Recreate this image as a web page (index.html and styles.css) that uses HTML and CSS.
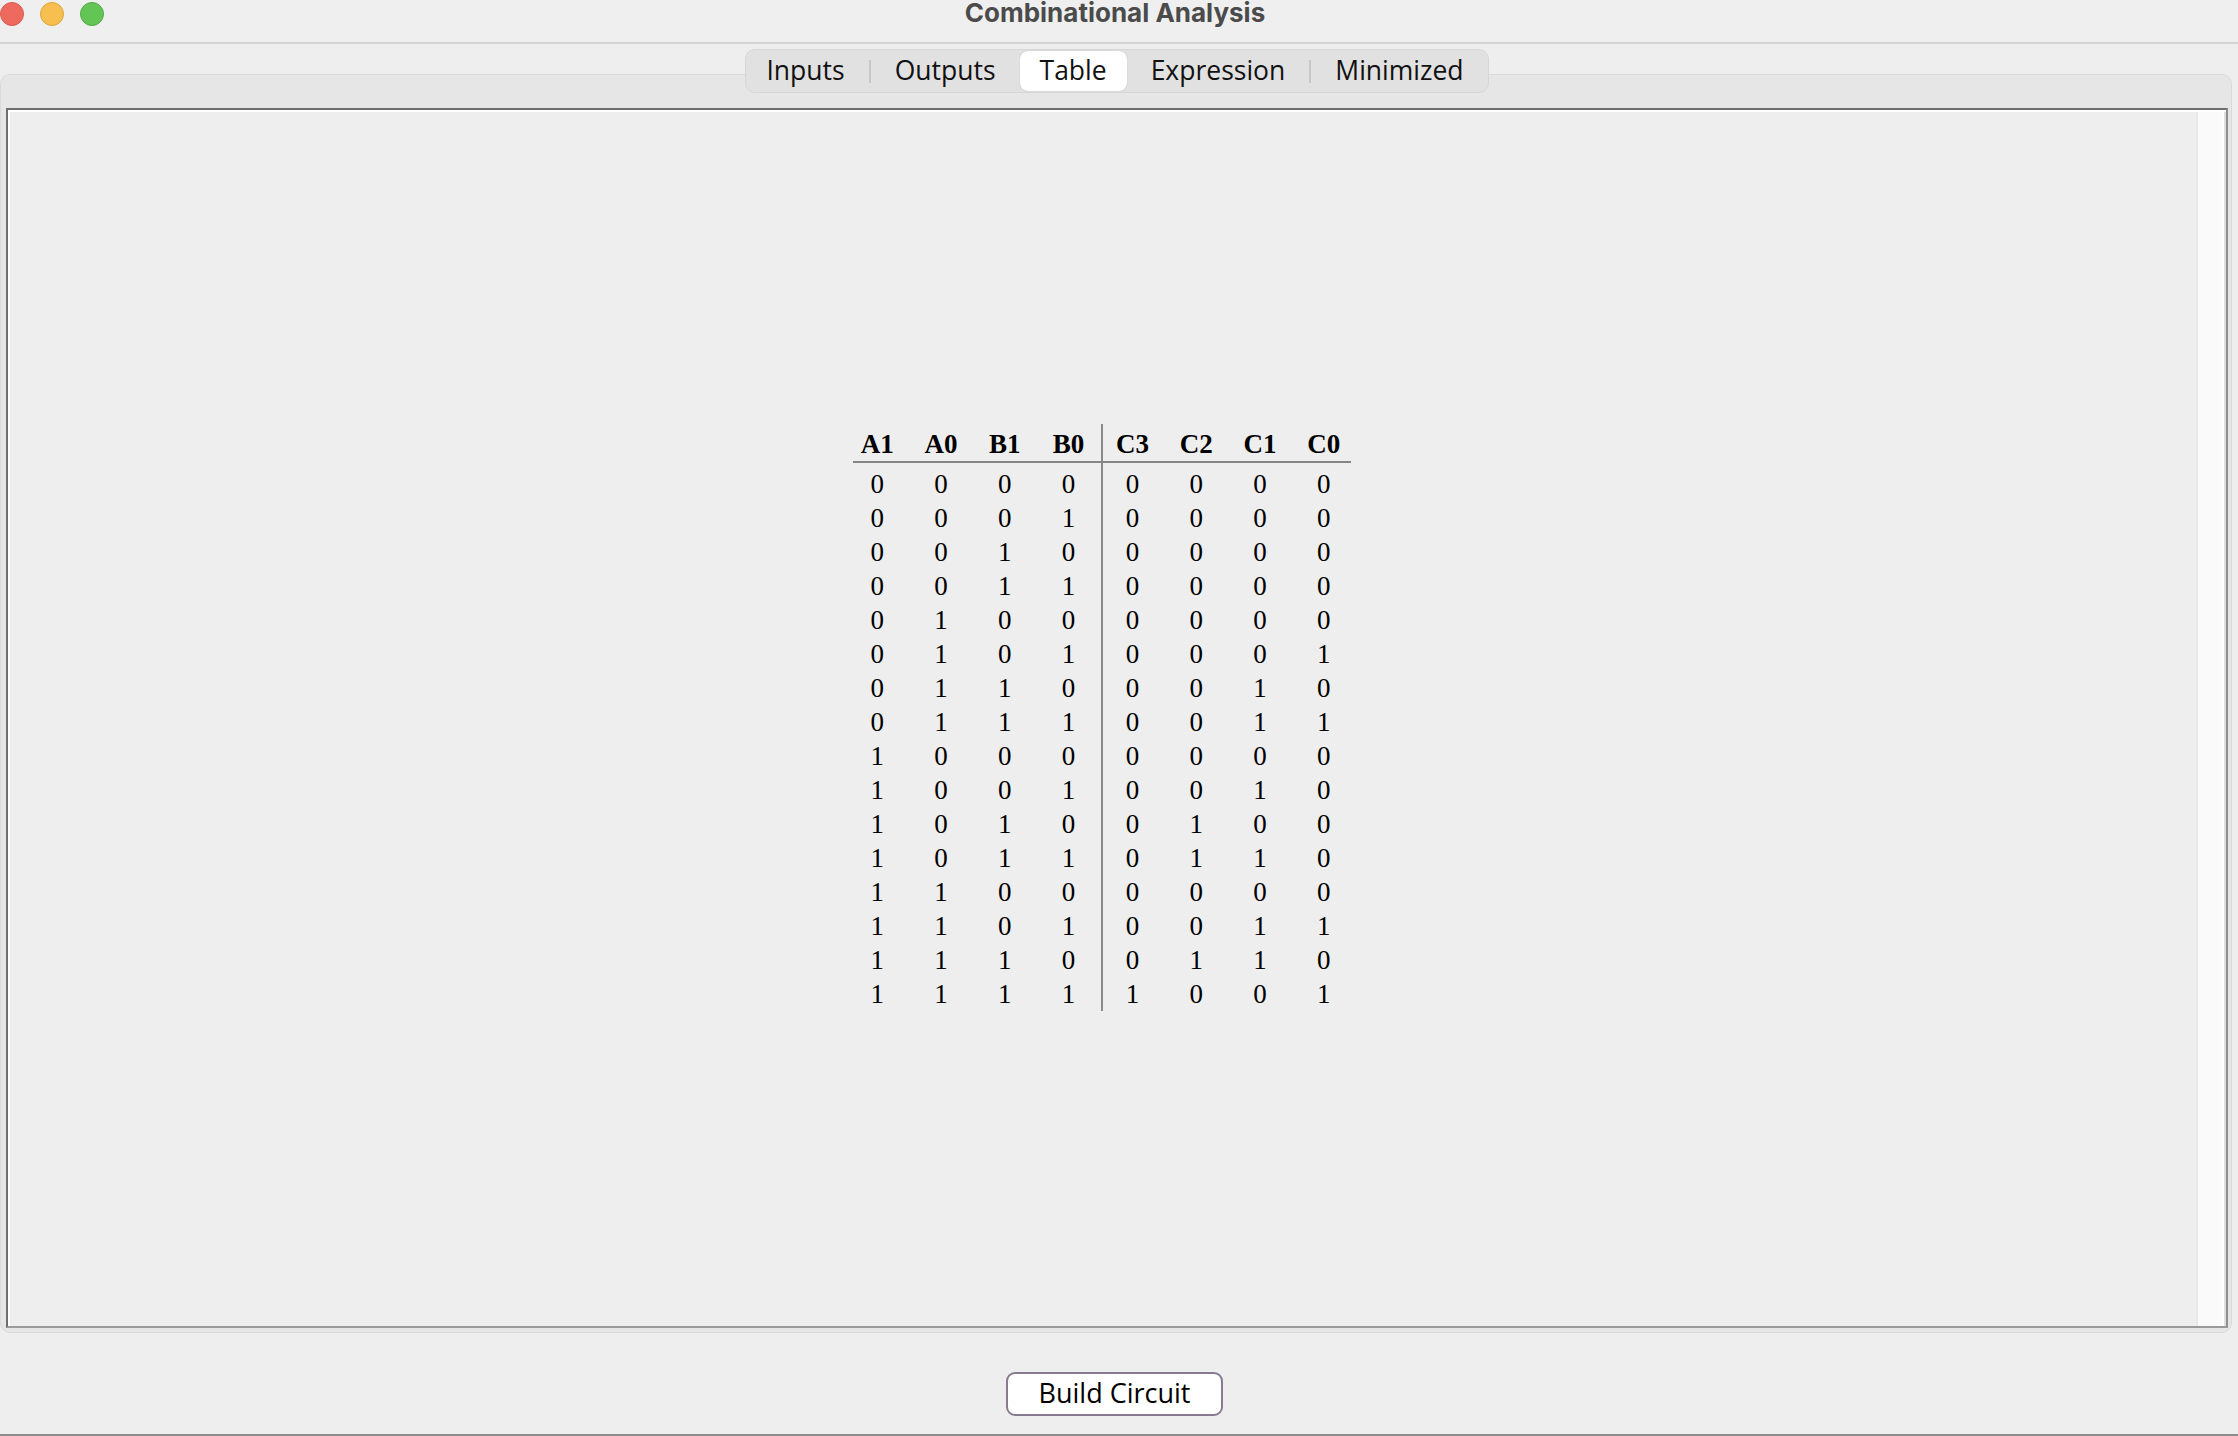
FILE: index.html
```html
<!DOCTYPE html>
<html lang="en">
<head>
<meta charset="utf-8">
<title>Combinational Analysis</title>
<link rel="stylesheet" href="styles.css">
</head>
<body>
<div class="window">
  <header class="titlebar">
    <div class="lights">
      <span class="light red"></span>
      <span class="light yellow"></span>
      <span class="light green"></span>
    </div>
    <div class="title">Combinational Analysis</div>
    <div class="spacer"></div>
  </header>

  <main class="pane">
    <nav class="tabs">
      <span class="tab">Inputs</span>
      <span class="sep"></span>
      <span class="tab">Outputs</span>
      <span class="tab selected">Table</span>
      <span class="tab">Expression</span>
      <span class="sep"></span>
      <span class="tab">Minimized</span>
    </nav>
    <section class="content">
      <div class="inner">
        <div class="view">
          <div class="truth">
            <div class="th">A1</div><div class="th">A0</div><div class="th">B1</div><div class="th">B0</div>
            <div class="th">C3</div><div class="th">C2</div><div class="th">C1</div><div class="th">C0</div>
            <div class="rule"></div>
            <div>0</div><div>0</div><div>0</div><div>0</div><div>0</div><div>0</div><div>0</div><div>0</div>
            <div>0</div><div>0</div><div>0</div><div>1</div><div>0</div><div>0</div><div>0</div><div>0</div>
            <div>0</div><div>0</div><div>1</div><div>0</div><div>0</div><div>0</div><div>0</div><div>0</div>
            <div>0</div><div>0</div><div>1</div><div>1</div><div>0</div><div>0</div><div>0</div><div>0</div>
            <div>0</div><div>1</div><div>0</div><div>0</div><div>0</div><div>0</div><div>0</div><div>0</div>
            <div>0</div><div>1</div><div>0</div><div>1</div><div>0</div><div>0</div><div>0</div><div>1</div>
            <div>0</div><div>1</div><div>1</div><div>0</div><div>0</div><div>0</div><div>1</div><div>0</div>
            <div>0</div><div>1</div><div>1</div><div>1</div><div>0</div><div>0</div><div>1</div><div>1</div>
            <div>1</div><div>0</div><div>0</div><div>0</div><div>0</div><div>0</div><div>0</div><div>0</div>
            <div>1</div><div>0</div><div>0</div><div>1</div><div>0</div><div>0</div><div>1</div><div>0</div>
            <div>1</div><div>0</div><div>1</div><div>0</div><div>0</div><div>1</div><div>0</div><div>0</div>
            <div>1</div><div>0</div><div>1</div><div>1</div><div>0</div><div>1</div><div>1</div><div>0</div>
            <div>1</div><div>1</div><div>0</div><div>0</div><div>0</div><div>0</div><div>0</div><div>0</div>
            <div>1</div><div>1</div><div>0</div><div>1</div><div>0</div><div>0</div><div>1</div><div>1</div>
            <div>1</div><div>1</div><div>1</div><div>0</div><div>0</div><div>1</div><div>1</div><div>0</div>
            <div>1</div><div>1</div><div>1</div><div>1</div><div>1</div><div>0</div><div>0</div><div>1</div>
          </div>
        </div>
        <div class="track"></div>
      </div>
    </section>
  </main>

  <footer class="actions">
    <button class="build" type="button">Build Circuit</button>
  </footer>
  <div class="edge"></div>
</div>
</body>
</html>
```

FILE: styles.css
```css
* {
  box-sizing: border-box;
}

html, body {
  margin: 0;
  padding: 0;
  width: 2238px;
  height: 1436px;
  overflow: hidden;
  background: #eeeeee;
}

.window {
  display: flex;
  flex-direction: column;
  width: 2238px;
  height: 1436px;
  background: #eeeeee;
  font-family: "Open Sans", "Noto Sans", sans-serif;
}

/* ---------- title bar ---------- */
.titlebar {
  height: 44px;
  flex: 0 0 44px;
  display: grid;
  grid-template-columns: 1fr auto 1fr;
  padding-right: 8px;
  background: #efefef;
  border-bottom: 2px solid #d3d3d3;
}

.lights {
  display: flex;
  gap: 16px;
  padding-top: 2px;
  align-items: flex-start;
}

.light {
  width: 24px;
  height: 24px;
  border-radius: 50%;
  border: 1px solid;
}

.red {
  background: #ee6a5f;
  border-color: #d65a4f;
}

.yellow {
  background: #f6bf4f;
  border-color: #dca53c;
}

.green {
  background: #62c554;
  border-color: #50aa43;
}

.title {
  font-family: "Inter", "Liberation Sans", sans-serif;
  font-weight: 700;
  font-size: 26px;
  line-height: 26px;
  color: #4b4b4b;
  white-space: nowrap;
}

/* ---------- tab pane ---------- */
.pane {
  flex: 1 1 auto;
  margin-top: 30px;
  margin-right: 6px;
  display: flex;
  flex-direction: column;
  background: #e6e6e6;
  border: 1px solid #dadada;
  border-radius: 10px;
  padding: 0 3px 4px 5px;
}

.tabs {
  align-self: center;
  display: flex;
  align-items: center;
  height: 44px;
  margin-top: -26px;
  margin-bottom: 15px;
  background: #e1e1e1;
  border: 1px solid #d6d6d6;
  border-radius: 10px;
}

.tab {
  padding: 0 24px 2px;
  font-size: 26.5px;
  line-height: 38px;
  color: #111111;
  white-space: nowrap;
}

.tab:first-child {
  padding-left: 20px;
  padding-right: 24px;
}

.tab.selected {
  padding: 0 20px 2px;
  height: 40px;
  background: #ffffff;
  border-radius: 8px;
  box-shadow: 0 0 1px rgba(0, 0, 0, 0.25);
}

.sep {
  width: 2px;
  height: 23px;
  background: #c7c7c7;
}

/* ---------- content area ---------- */
.content {
  flex: 1 1 auto;
  display: flex;
  border-top: 2px solid #6e6e6e;
  border-left: 2px solid #6e6e6e;
  border-right: 2px solid #8f8f8f;
  border-bottom: 2px solid #9a9a9a;
}

.inner {
  flex: 1 1 auto;
  display: flex;
  border-top: 2px solid #ffffff;
  border-left: 2px solid #ffffff;
}

.view {
  flex: 1 1 auto;
  display: flex;
  align-items: center;
  justify-content: center;
  padding-right: 5px;
  padding-bottom: 3px;
  background: #eeeeee;
}

.track {
  flex: 0 0 30px;
  background: #fafafa;
  border-left: 2px solid #e8e8e8;
  border-right: 2px solid #dedede;
  box-shadow: inset -2px 0 0 #ffffff;
}

/* ---------- truth table ---------- */
.truth {
  display: grid;
  grid-template-columns: repeat(8, 63.8px);
  grid-template-rows: 37px 6px repeat(16, 34px);
  font-family: "Liberation Serif", "Times New Roman", serif;
  font-size: 27px;
  line-height: 34px;
  color: #000000;
  text-align: center;
  background-image: linear-gradient(#8a8a8a, #8a8a8a);
  background-repeat: no-repeat;
  background-size: 2px 100%;
  background-position: 255.2px 0;
}

.th {
  font-weight: 700;
  align-self: end;
}

.rule {
  grid-column: 1 / -1;
  align-self: start;
  height: 2px;
  margin: 0 5px 0 7.5px;
  background: #868686;
}

/* ---------- footer ---------- */
.actions {
  flex: 0 0 101px;
  display: flex;
  justify-content: center;
  align-items: flex-start;
  padding-top: 39px;
  padding-right: 9px;
}

.build {
  width: 217px;
  height: 44px;
  padding: 0 0 2px;
  background: #ffffff;
  border: 2px solid #8a7a91;
  border-radius: 9px;
  font-family: "Open Sans", "Noto Sans", sans-serif;
  font-size: 27px;
  line-height: 36px;
  color: #000000;
}

.edge {
  flex: 0 0 2px;
  background: #8c8c8c;
}
```
